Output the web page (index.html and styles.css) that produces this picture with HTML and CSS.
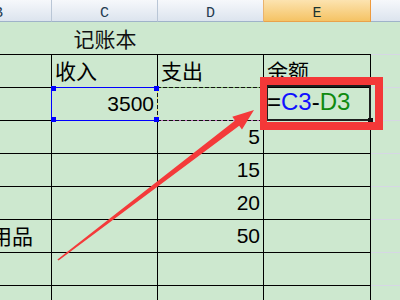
FILE: index.html
```html
<!DOCTYPE html>
<html lang="zh-CN">
<head>
<meta charset="utf-8">
<title>记账本</title>
<link rel="stylesheet" href="styles.css">
</head>
<body>
<div class="stage">
  <div class="sheet">
    <div class="hd">B</div>
    <div class="hd">C</div>
    <div class="hd hd-d">D</div>
    <div class="hd hd-sel">E</div>
    <div class="hd hd-f"></div>

    <div class="t"></div>
    <div class="t title">记账本</div>
    <div class="t"></div>
    <div class="t"></div>
    <div class="f"></div>

    <div class="c"></div>
    <div class="c cj">收入</div>
    <div class="c cj">支出</div>
    <div class="c cj">余额</div>
    <div class="f"></div>

    <div class="c"></div>
    <div class="c num ref-c"><span class="handles"></span>3500</div>
    <div class="c ref-d"></div>
    <div class="c active"><span class="eq">=</span><span class="rc">C3</span><span class="eq">-</span><span class="rd">D3</span><span class="fill"></span></div>
    <div class="f"></div>

    <div class="c"></div>
    <div class="c"></div>
    <div class="c num">5</div>
    <div class="c"></div>
    <div class="f"></div>

    <div class="c"></div>
    <div class="c"></div>
    <div class="c num">15</div>
    <div class="c"></div>
    <div class="f"></div>

    <div class="c"></div>
    <div class="c"></div>
    <div class="c num">20</div>
    <div class="c"></div>
    <div class="f"></div>

    <div class="c cj">生活用品</div>
    <div class="c"></div>
    <div class="c num">50</div>
    <div class="c"></div>
    <div class="f"></div>

    <div class="c"></div>
    <div class="c"></div>
    <div class="c"></div>
    <div class="c"></div>
    <div class="f"></div>

    <div class="c"></div>
    <div class="c"></div>
    <div class="c"></div>
    <div class="c"></div>
    <div class="f"></div>
  </div>

  <div class="redbox"></div>
  <svg class="arrow" width="400" height="300" viewBox="0 0 400 300">
    <polygon points="57.4,259.4 235.1,120.4 232.3,116.7 254,110 242.0,129.5 239.2,125.8 58.6,260.6" fill="#f43a3a"/>
  </svg>
</div>
</body>
</html>
```

FILE: styles.css
```css
* { box-sizing: border-box; }

html, body {
  margin: 0;
  padding: 0;
}

body {
  width: 400px;
  height: 300px;
  overflow: hidden;
  background: #cde8cf;
  font-family: "Liberation Sans", Arial, sans-serif;
}

.stage {
  position: relative;
  width: 400px;
  height: 300px;
  overflow: hidden;
}

.sheet {
  display: grid;
  margin-left: -54px;
  grid-template-columns: 106px 106px 106px 107px 60px;
  grid-template-rows: 22px repeat(9, 33px);
}

/* column headers */
.hd {
  display: flex;
  justify-content: center;
  align-items: center;
  padding-top: 6px;
  font: 15px "Liberation Mono", "DejaVu Sans Mono", monospace;
  color: #243a50;
  background: linear-gradient(#f6f8fb, #dce4ee);
  border-right: 1px solid #b9c6d6;
  border-bottom: 1px solid #9fb3c9;
}

.hd-d {
  border-right-color: #eab36e;
}

.hd-sel {
  color: #1a3431;
  background: linear-gradient(#fce3b0, #f5c364);
  border-right-color: #ee9a3e;
  border-bottom-color: #e9a24c;
}

.hd-f {
  border-right: none;
}

/* title row */
.t {
  border-bottom: 1px solid #000;
}

.title {
  display: flex;
  justify-content: center;
  align-items: center;
  font: 21px "Noto Sans CJK SC", sans-serif;
  color: #111;
  padding-bottom: 1px;
}

/* right-hand empty column with plain gridlines */
.f {
  border-bottom: 1px solid #d6d7e4;
}

/* bordered cells */
.c {
  position: relative;
  display: flex;
  align-items: center;
  border-right: 1px solid #000;
  border-bottom: 1px solid #000;
  color: #000;
}

.cj {
  font: 21px "Noto Sans CJK SC", sans-serif;
  padding-left: 3px;
  padding-bottom: 3px;
  white-space: nowrap;
  overflow: hidden;
}

.num {
  justify-content: flex-end;
  padding-right: 3px;
  font-size: 21px;
}

/* referenced cell C3: blue outline with corner handles */
.ref-c::after {
  content: "";
  position: absolute;
  left: -1px;
  top: -1px;
  right: -1px;
  bottom: -1px;
  border: 1px solid #0000ff;
}

.handles {
  position: absolute;
  left: -1px;
  top: -2px;
  right: -2px;
  bottom: -2px;
  z-index: 2;
  background:
    linear-gradient(#0000ff, #0000ff) left top / 5px 5px no-repeat,
    linear-gradient(#0000ff, #0000ff) right top / 5px 5px no-repeat,
    linear-gradient(#0000ff, #0000ff) left bottom / 5px 5px no-repeat,
    linear-gradient(#0000ff, #0000ff) right bottom / 5px 5px no-repeat;
}

/* referenced cell D3: dashed marquee */
.ref-d::before {
  content: "";
  position: absolute;
  left: -1px;
  top: -1px;
  right: -1px;
  bottom: -1px;
  border: 1px solid #c46fc4;
  border-top-color: #6fae5a;
}

.ref-d::after {
  content: "";
  position: absolute;
  left: -1px;
  top: -1px;
  right: -1px;
  bottom: -1px;
  z-index: 1;
  background:
    repeating-linear-gradient(90deg, #111 0 4px, transparent 4px 6px) left top / 100% 1px no-repeat,
    repeating-linear-gradient(90deg, #111 0 4px, transparent 4px 6px) left bottom / 100% 1px no-repeat,
    repeating-linear-gradient(180deg, #111 0 4px, #e6e25a 4px 6px) left top / 1px 100% no-repeat;
}

/* active cell E3 with formula */
.active {
  padding-left: 3px;
  padding-bottom: 4px;
  font-size: 24px;
}

.active::after {
  content: "";
  position: absolute;
  left: 2px;
  top: -3px;
  right: -1px;
  bottom: -1px;
  border: 2px solid #1e1e1e;
}

.eq { color: #000; }
.rc { color: #1010ff; }
.rd { color: #0f8a0f; }

.fill {
  position: absolute;
  right: -3px;
  bottom: -3px;
  width: 5px;
  height: 5px;
  background: #111;
  z-index: 2;
}

/* annotation overlays */
.redbox {
  position: absolute;
  left: 260px;
  top: 77px;
  width: 123px;
  height: 53px;
  border: 8px solid #f43838;
  border-left-width: 7px;
  z-index: 5;
}

.arrow {
  position: absolute;
  left: 0;
  top: 0;
  z-index: 6;
}
```
